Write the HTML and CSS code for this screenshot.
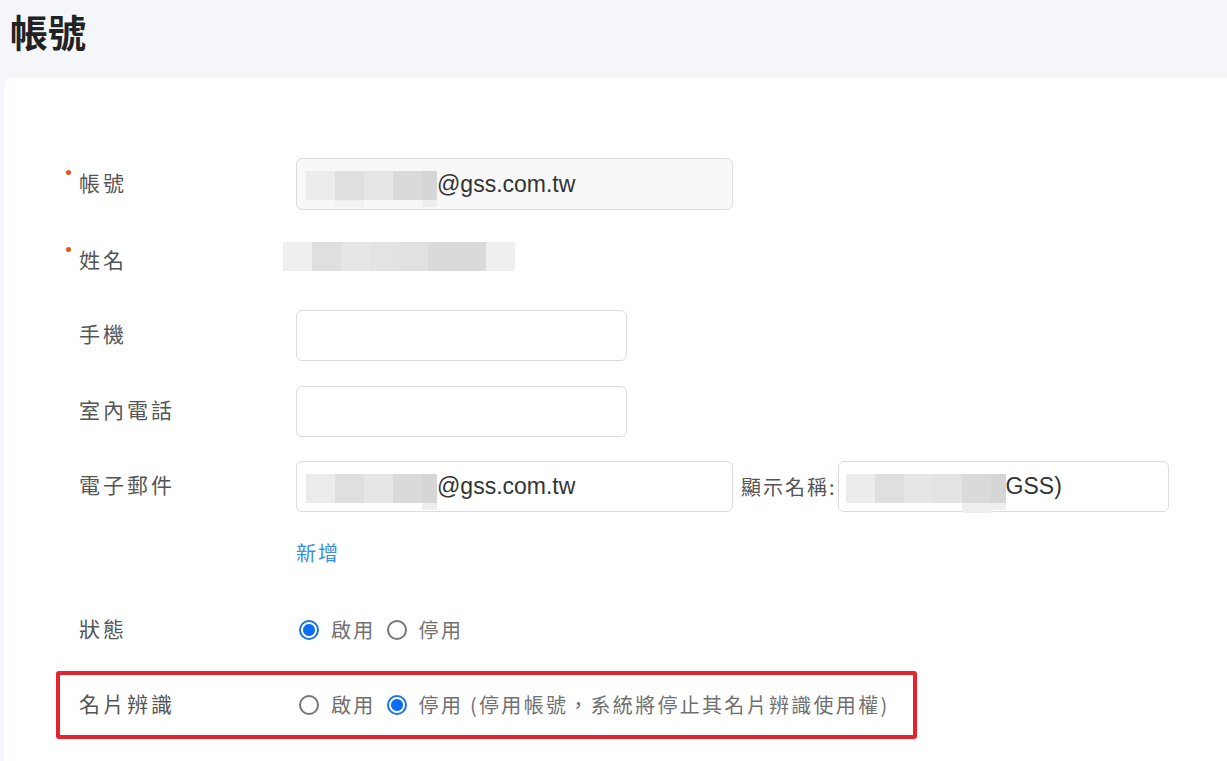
FILE: index.html
```html
<!DOCTYPE html>
<html lang="zh-Hant">
<head>
    <meta charset="UTF-8">
    <meta name="viewport" content="width=device-width, initial-scale=1.0">
    <title>帳號</title>
    <link rel="stylesheet" href="styles.css">
</head>
<body>
    <div class="page-head">
        <h1>帳號</h1>
    </div>

    <div class="card">
        <div class="row row-account">
            <div class="label required">帳號</div>
            <div class="field field-wide field-disabled">
                <span class="mask">
                    <span class="px px-a"></span><span class="px px-b px-tail"></span><span class="px px-c"></span><span class="px px-d"></span><span class="px px-e px-half"></span>
                </span>
                <span class="field-text">@gss.com.tw</span>
            </div>
        </div>

        <div class="row row-name">
            <div class="label required">姓名</div>
            <div class="name-mask">
                <span class="px px-f"></span><span class="px px-b"></span><span class="px px-c"></span><span class="px px-g"></span><span class="px px-h"></span><span class="px px-d px-double"></span><span class="px px-f"></span>
            </div>
        </div>

        <div class="row row-mobile">
            <div class="label">手機</div>
            <div class="field"></div>
        </div>

        <div class="row row-phone">
            <div class="label">室內電話</div>
            <div class="field"></div>
        </div>

        <div class="row row-mail">
            <div class="label">電子郵件</div>
            <div class="field field-wide">
                <span class="mask">
                    <span class="px px-a"></span><span class="px px-b"></span><span class="px px-c"></span><span class="px px-d"></span><span class="px px-e px-half"></span>
                </span>
                <span class="field-text">@gss.com.tw</span>
            </div>
            <span class="inline-label">顯示名稱:</span>
            <div class="field field-display">
                <span class="mask">
                    <span class="px px-a"></span><span class="px px-b"></span><span class="px px-c"></span><span class="px px-g"></span><span class="px px-d px-tail-wide"></span><span class="px px-e px-half"></span>
                </span>
                <span class="field-text">GSS)</span>
            </div>
        </div>

        <div class="row row-add">
            <div class="label"></div>
            <a href="#" class="link-add">新增</a>
        </div>

        <div class="row row-status">
            <div class="label">狀態</div>
            <div class="radios">
                <span class="radio checked"></span><span class="radio-text">啟用</span>
                <span class="radio"></span><span class="radio-text">停用</span>
            </div>
        </div>

        <div class="row row-card highlight">
            <div class="label">名片辨識</div>
            <div class="radios">
                <span class="radio"></span><span class="radio-text">啟用</span>
                <span class="radio checked"></span><span class="radio-text">停用 (停用帳號，系統將停止其名片辨識使用權)</span>
            </div>
        </div>
    </div>
</body>
</html>
```

FILE: styles.css
```css
body {
    margin: 0;
    background-color: #f5f6fa;
    font-family: "Noto Sans CJK TC", "Noto Sans", sans-serif;
    overflow: hidden;
}
.page-head {
    height: 78px;
    box-sizing: border-box;
    padding: 11px 10px 0;
}
h1 {
    margin: 0;
    font-size: 38px;
    line-height: 40px;
    font-weight: 700;
    color: #222;
}
.card {
    margin-left: 4px;
    height: 603px;
    background-color: #fff;
    border-radius: 8px 0 0 0;
    padding: 80px 0 0 52px;
}
.row {
    display: flex;
    align-items: center;
    padding: 0 19px;
    border: 4px solid transparent;
    border-radius: 3px;
}
.row-account { height: 52px; margin-top: -4px; }
.row-name { height: 52px; margin-top: 12px; }
.row-mobile { height: 51px; margin-top: 20px; }
.row-phone { height: 52px; margin-top: 16px; }
.row-mail { height: 51px; margin-top: 16px; }
.row-add { height: 30px; margin-top: 17px; }
.row-status { height: 40px; margin-top: 35px; }
.row-card { height: 60px; margin-top: 17px; }
.highlight {
    border-color: #e5232d;
    width: fit-content;
    padding-right: 23px;
}
.label {
    position: relative;
    width: 217px;
    flex-shrink: 0;
    padding-bottom: 5px;
    font-size: 21px;
    letter-spacing: 3px;
    color: #555;
}
.row-name .label {
    padding-bottom: 0;
    margin-top: 6px;
}
.required::before {
    content: "";
    position: absolute;
    left: -13px;
    top: 3px;
    width: 5px;
    height: 5px;
    border-radius: 50%;
    background-color: #e0561c;
}
.field {
    display: flex;
    align-items: center;
    box-sizing: border-box;
    width: 331px;
    height: 51px;
    padding-left: 9px;
    border: 1px solid #dcdcdc;
    border-radius: 6px;
    background-color: #fff;
}
.field-wide { width: 437px; }
.field-disabled {
    height: 52px;
    background-color: #f8f8f8;
}
.field-display {
    width: 331px;
    padding-left: 7px;
}
.field-text {
    font-family: "Liberation Sans", Arial, sans-serif;
    font-size: 23px;
    color: #333;
}
.mask {
    display: flex;
    align-items: flex-start;
    height: 29px;
    margin-top: 3px;
}
.px {
    display: block;
    width: 29px;
    height: 29px;
}
.px-a { background-color: #ececec; }
.px-b { background-color: #dfdfdf; }
.px-c { background-color: #e6e6e6; }
.px-d { background-color: #dadada; }
.px-e { background-color: #d6d6d6; }
.px-f { background-color: #efefef; }
.px-g { background-color: #e3e3e3; }
.px-h { background-color: #e1e1e1; }
.px-half { width: 15px; height: 36px; background: linear-gradient(#d6d6d6 29px, #eeeeee 29px); }
.px-double { width: 58px; }
.px-tail { height: 36px; background: linear-gradient(#dfdfdf 29px, #f1f1f1 29px); }
.px-tail-wide { height: 39px; background: linear-gradient(#dadada 29px, #eeeeee 29px); }
.name-mask {
    display: flex;
    margin-left: -13px;
}
.inline-label {
    margin: 0 1px 0 8px;
    font-size: 20px;
    letter-spacing: 2px;
    color: #555;
}
.link-add {
    font-size: 20px;
    letter-spacing: 2px;
    color: #3a8ee0;
    text-decoration: none;
}
.radios {
    display: flex;
    align-items: center;
    margin-left: 3px;
}
.radio {
    display: block;
    box-sizing: border-box;
    width: 20px;
    height: 20px;
    border: 2px solid #767676;
    border-radius: 50%;
    margin-right: 12px;
}
.radio.checked {
    border-color: #1a73e8;
    background: radial-gradient(circle, #0b6ff5 5.5px, #fff 6.5px);
}
.radio-text {
    margin-right: 11px;
    padding-bottom: 2px;
    font-size: 20px;
    letter-spacing: 2.3px;
    color: #707070;
}
.radio-text:last-child {
    margin-right: 0;
}
```
